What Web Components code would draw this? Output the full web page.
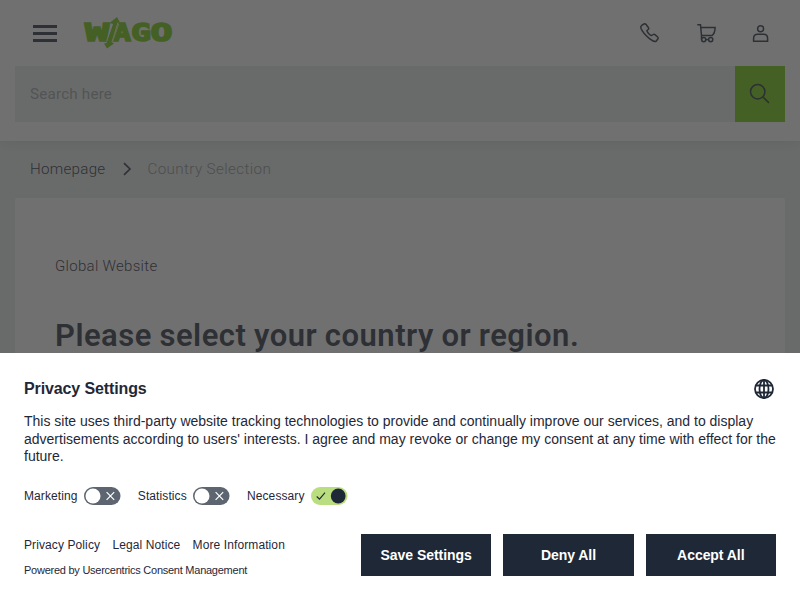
<!DOCTYPE html>
<html lang="en">
<head>
<meta charset="utf-8">
<title>WAGO | Country Selection</title>
<style>
    body {
        margin: 0;
        height: 600px;
        overflow: hidden;
        background: #e8eeec;
        color: #1f2837;
        font-family: Roboto, "Liberation Sans", sans-serif;
    }
</style>
</head>
<body>
    <site-header></site-header>
    <bread-crumb><span>Homepage</span><span slot="current">Country Selection</span></bread-crumb>
    <country-card>
        <span slot="kicker">Global Website</span>
        Please select your country or region.
    </country-card>
    <privacy-banner></privacy-banner>

<script>
class WagoLogo extends HTMLElement {
    connectedCallback() {
        this.attachShadow({mode: "open"}).innerHTML = `
        <style>
            :host { display: block; width: 90px; height: 34px; }
            svg { display: block; }
            text { font: bold 24px "DejaVu Sans Mono", monospace; fill: #6ec800; stroke: #6ec800; stroke-width: 1.5; }
        </style>
        <svg width="90" height="34" viewBox="0 0 90 34">
            <text x="2" y="25.3" textLength="24" lengthAdjust="spacingAndGlyphs">W</text>
            <text x="30" y="25.3" textLength="18" lengthAdjust="spacingAndGlyphs">A</text>
            <text x="48" y="25.3" textLength="20" lengthAdjust="spacingAndGlyphs">G</text>
            <text x="67.5" y="25.3" textLength="22" lengthAdjust="spacingAndGlyphs">O</text>
            <path d="M34 1 L37 6.5 L34.5 6.5 L28.5 26 L31 27.5 L24 32.5 L21 27.5 L23.5 27 L30 8 L26.5 7 Z" fill="#6ec800"/>
            <path d="M35.8 8 L29.6 25.5 M29.3 8.5 L23.6 25" stroke="#fff" stroke-width="0.7"/>
        </svg>`;
    }
}

class SiteHeader extends HTMLElement {
    connectedCallback() {
        this.attachShadow({mode: "open"}).innerHTML = `
        <style>
            :host {
                display: block;
                height: 141px;
                background: #fff;
                box-shadow: 0 2px 12px rgba(31, 40, 55, 0.12);
            }
            .top { display: flex; align-items: center; height: 66px; padding: 0 30px 0 33px; box-sizing: border-box; }
            .burger { display: grid; gap: 4px; width: 24px; margin-right: 26px; }
            .burger i { height: 3px; background: #1f2837; }
            .icons { display: flex; gap: 33px; margin: 0 0.5px 0 auto; }
            svg { fill: none; stroke: #1f2837; stroke-width: 1.5; }
            .search { display: flex; height: 56px; margin: 0 15px; background: #e8eeec; }
            .field { flex: 1; padding-left: 15px; line-height: 57px; font-size: 15.2px; color: #9ba1a3; letter-spacing: .2px; }
            .go { display: grid; place-items: center; width: 50px; background: #6ec800; }
        </style>
        <div class="top">
            <div class="burger"><i></i><i></i><i></i></div>
            <wago-logo></wago-logo>
            <div class="icons">
                <svg width="24" height="24" viewBox="0.5 0 24 24"><path d="M4.5 4.2 L6.5 3 Q7.7 2.4 8.6 3.5 L11 6.7 Q11.7 7.7 10.7 8.5 L9.4 9.6 Q9.3 10.4 11.1 12.4 Q13.1 14.7 14 14.6 L15.6 13.5 Q16.5 12.8 17.4 13.6 L20.2 16 Q21.2 16.9 20.3 18 L18.5 20.3 Q16.5 21.2 12.3 17.9 Q5.4 12.3 3.4 7.3 Q2.8 5.3 4.5 4.2Z"/></svg>
                <svg width="24" height="24" viewBox="0.7 0 24 24"><path d="M3 3.8 H6.2 L7.2 14.5 H17.8 Q20.8 12 20.8 6.5 H6.5 M7.2 14.5 V18.5"/><circle cx="9.4" cy="18.6" r="2.1"/><circle cx="16.4" cy="18.6" r="2.1"/><path d="M11.5 18.6 H14.3"/></svg>
                <svg width="18" height="24" viewBox="0.4 0 18 24"><circle cx="9" cy="7.7" r="3"/><path d="M2 20.2 V17.5 Q2 13.3 6 13.3 H12 Q16 13.3 16 17.5 V20.2Z"/></svg>
            </div>
        </div>
        <div class="search">
            <div class="field">Search here</div>
            <div class="go"><svg width="24" height="24" viewBox="0 0 24 24"><circle cx="9.7" cy="9.7" r="7.2"/><path d="M14.9 14.9 L20.9 20.9"/></svg></div>
        </div>`;
    }
}

class BreadCrumb extends HTMLElement {
    connectedCallback() {
        this.attachShadow({mode: "open"}).innerHTML = `
        <style>
            :host {
                display: flex;
                align-items: center;
                height: 57px;
                box-sizing: border-box;
                padding: 0 0 1px 30px;
                font-size: 15.2px;
                font-weight: 300;
                letter-spacing: .25px;
            }
            svg { margin: 0 15px 1px 17px; fill: none; stroke: #1f2837; stroke-width: 1.6; }
            .current { color: #868c8e; letter-spacing: .38px; }
        </style>
        <slot></slot>
        <svg width="10" height="14" viewBox="0 0 10 14"><path d="M2 1.2 L8 7 L2 12.8"/></svg>
        <span class="current"><slot name="current"></slot></span>`;
    }
}

class CountryCard extends HTMLElement {
    connectedCallback() {
        this.attachShadow({mode: "open"}).innerHTML = `
        <style>
            :host { display: block; height: 402px; margin: 0 15px; padding: 56px 40px 0; box-sizing: border-box; background: #fff; border-radius: 3px; }
            p { margin: 0 0 36px; font-size: 15px; font-weight: 300; line-height: 24px; letter-spacing: .3px; }
            h1 { margin: 0; font-size: 31px; font-weight: 600; line-height: 43px; letter-spacing: .5px; word-spacing: -.6px; white-space: nowrap; }
        </style>
        <p><slot name="kicker"></slot></p>
        <h1><slot></slot></h1>`;
    }
}

class ConsentToggle extends HTMLElement {
    connectedCallback() {
        const on = this.hasAttribute("on");
        this.attachShadow({mode: "open"}).innerHTML = `
        <style>
            :host { display: flex; align-items: center; gap: 6px; font-size: 12px; line-height: 18px; letter-spacing: .1px; }
            svg { display: block; fill: none; }
        </style>
        <slot></slot>
        <svg width="37" height="18" viewBox="0 0 37 18">${on
            ? `<rect width="36.5" height="18" rx="9" fill="#b9dd7f"/><circle cx="27.2" cy="9" r="7.4" fill="#1f2837"/><path d="M5.7 9.5 L8.5 12.2 L14 5.7" stroke="#1f2837" stroke-width="1.1"/>`
            : `<rect width="36.5" height="18" rx="9" fill="#5d6570"/><circle cx="9" cy="9" r="7.5" fill="#fff"/><path d="M22.6 5.2 L30.2 12.8 M30.2 5.2 L22.6 12.8" stroke="#fff" stroke-width="1.2"/>`}
        </svg>`;
    }
}

class BannerButton extends HTMLElement {
    connectedCallback() {
        this.attachShadow({mode: "open"}).innerHTML = `
        <style>
            :host { display: block; flex: 1; }
            button {
                width: 100%;
                height: 42px;
                padding: 0;
                border: 0;
                color: #fff;
                background: #1f2837;
                font: bold 14px "Liberation Sans", Arial, sans-serif;
                letter-spacing: -.05px;
            }
        </style>
        <button><slot></slot></button>`;
    }
}

class PrivacyBanner extends HTMLElement {
    connectedCallback() {
        this.attachShadow({mode: "open"}).innerHTML = `
        <style>
            :host {
                position: fixed;
                inset: 0;
                display: flex;
                flex-direction: column;
                justify-content: flex-end;
                background: rgba(51, 51, 51, 0.7);
                font-family: "Liberation Sans", Arial, sans-serif;
            }
            .sheet { height: 247px; padding: 24px; box-sizing: border-box; background: #fff; }
            .title { display: flex; justify-content: space-between; height: 24px; }
            h2 { margin: 0; font-size: 16px; line-height: 24px; letter-spacing: -.12px; }
            svg { margin: 1px 1px 0 0; fill: none; stroke: #1f2837; stroke-width: 1.8; }
            p { margin: 12px 0 21px; font-size: 14px; line-height: 17.5px; white-space: nowrap; }
            .toggles { display: flex; gap: 17.2px; }
            .bottom { display: flex; justify-content: space-between; margin-top: 29px; }
            .links { display: flex; gap: 12.3px; font-size: 12px; line-height: 22px; letter-spacing: .1px; }
            .powered { margin-top: 6px; font-size: 11px; line-height: 16px; letter-spacing: -.25px; }
            .buttons { display: flex; gap: 12px; width: 415px; }
        </style>
        <div class="sheet">
            <div class="title">
                <h2>Privacy Settings</h2>
                <svg width="22" height="22" viewBox="0 0 22 22"><circle cx="11" cy="11" r="9"/><ellipse cx="11" cy="11" rx="4.5" ry="9"/><path d="M11 2 V20 M3 7.5 H19 M3 14.5 H19"/></svg>
            </div>
            <p>This site uses third-party website tracking technologies to provide and continually improve our services, and to display<br>advertisements according to users' interests. I agree and may revoke or change my consent at any time with effect for the<br>future.</p>
            <div class="toggles">
                <consent-toggle>Marketing</consent-toggle>
                <consent-toggle>Statistics</consent-toggle>
                <consent-toggle on>Necessary</consent-toggle>
            </div>
            <div class="bottom">
                <div>
                    <div class="links"><span>Privacy Policy</span><span>Legal Notice</span><span>More Information</span></div>
                    <div class="powered">Powered by Usercentrics Consent Management</div>
                </div>
                <div class="buttons">
                    <banner-button>Save Settings</banner-button>
                    <banner-button>Deny All</banner-button>
                    <banner-button>Accept All</banner-button>
                </div>
            </div>
        </div>`;
    }
}

customElements.define("wago-logo", WagoLogo);
customElements.define("site-header", SiteHeader);
customElements.define("bread-crumb", BreadCrumb);
customElements.define("country-card", CountryCard);
customElements.define("consent-toggle", ConsentToggle);
customElements.define("banner-button", BannerButton);
customElements.define("privacy-banner", PrivacyBanner);
</script>
</body>
</html>
